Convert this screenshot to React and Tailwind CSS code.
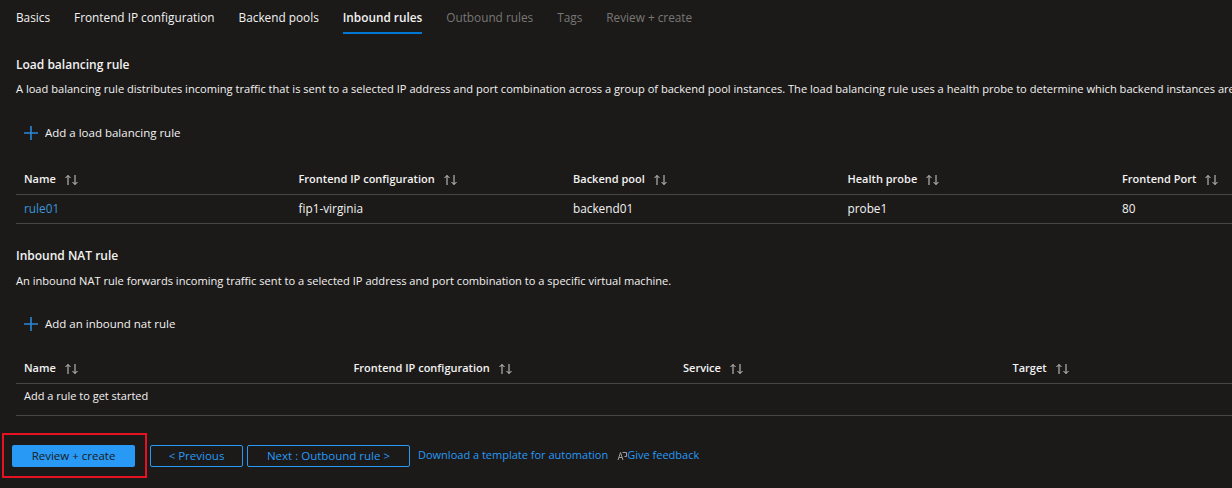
import React from 'react';

const font = { fontFamily: '"Segoe UI", "Open Sans", "Liberation Sans", sans-serif' };

function SortIcon() {
    return (
        <svg width="16" height="12" viewBox="0 0 16 12" className="ml-2 shrink-0" fill="none" stroke="#d2d0ce" strokeWidth="1">
            <path d="M4 11V1.5M1.5 4L4 1.5L6.5 4" />
            <path d="M11 1v9.5M8.5 8L11 10.5L13.5 8" />
        </svg>
    );
}

function PlusIcon() {
    return (
        <svg width="14" height="14" viewBox="0 0 14 14" className="shrink-0" stroke="#2b88d8" strokeWidth="1.6">
            <path d="M7 0v14M0 7h14" />
        </svg>
    );
}

function Table({ cols, colW, rows }) {
    return (
        <div className="ml-4" style={{ width: cols.length * colW }}>
            <div className="flex h-[30px] items-center border-b border-[#484644]">
                {cols.map((c) => (
                    <div key={c} className="flex items-center px-2 text-[11px] font-semibold text-[#f3f2f1]" style={{ width: colW }}>
                        {c}
                        <SortIcon />
                    </div>
                ))}
            </div>
            {rows}
        </div>
    );
}

export default function App() {
    const tabs = [
        { label: 'Basics', state: 'done' },
        { label: 'Frontend IP configuration', state: 'done' },
        { label: 'Backend pools', state: 'done' },
        { label: 'Inbound rules', state: 'active' },
        { label: 'Outbound rules', state: 'off' },
        { label: 'Tags', state: 'off' },
        { label: 'Review + create', state: 'off' },
    ];

    return (
        <div className="h-[488px] w-[1232px] overflow-hidden bg-[#1b1a19] text-[#f3f2f1]" style={font}>
            {/* Tabs */}
            <div className="flex gap-[24px] pl-4">
                {tabs.map((t) => (
                    <div
                        key={t.label}
                        className={
                            'flex h-[34px] items-center whitespace-nowrap border-b-2 pt-[3px] text-[11.8px] ' +
                            (t.state === 'active'
                                ? 'border-[#0078d4] font-semibold text-[#f3f2f1]'
                                : t.state === 'off'
                                ? 'border-transparent text-[#797775]'
                                : 'border-transparent text-[#f3f2f1]')
                        }
                    >
                        {t.label}
                    </div>
                ))}
            </div>

            {/* Load balancing rule */}
            <div className="mt-[22px] pl-4 text-[12px] font-semibold leading-[18px]">Load balancing rule</div>
            <div className="mt-[7px] whitespace-nowrap pl-4 text-[11.1px] leading-[16px]">
                A load balancing rule distributes incoming traffic that is sent to a selected IP address and port combination across a group of backend pool instances. The load balancing rule uses a health probe to determine which backend instances are healthy and can receive traffic.
            </div>
            <div className="mt-[26px] flex h-[20px] items-center gap-[7px] pl-6 text-[11.5px]">
                <PlusIcon />
                <span>Add a load balancing rule</span>
            </div>

            <div className="mt-[22px]">
                <Table
                    cols={['Name', 'Frontend IP configuration', 'Backend pool', 'Health probe', 'Frontend Port']}
                    colW={274.5}
                    rows={
                        <div className="flex h-[29px] items-center border-b border-[#484644] text-[11.8px]">
                            <div className="px-2 text-[#3a96dd]" style={{ width: 274.5 }}>rule01</div>
                            <div className="px-2" style={{ width: 274.5 }}>fip1-virginia</div>
                            <div className="px-2" style={{ width: 274.5 }}>backend01</div>
                            <div className="px-2" style={{ width: 274.5 }}>probe1</div>
                            <div className="px-2" style={{ width: 274.5 }}>80</div>
                        </div>
                    }
                />
            </div>

            {/* Inbound NAT rule */}
            <div className="mt-[23px] pl-4 text-[12px] font-semibold leading-[18px]">Inbound NAT rule</div>
            <div className="mt-[8px] whitespace-nowrap pl-4 text-[11.1px] leading-[16px]">
                An inbound NAT rule forwards incoming traffic sent to a selected IP address and port combination to a specific virtual machine.
            </div>
            <div className="mt-[25px] flex h-[20px] items-center gap-[7px] pl-6 text-[11.5px]">
                <PlusIcon />
                <span>Add an inbound nat rule</span>
            </div>

            <div className="mt-[20px]">
                <Table
                    cols={['Name', 'Frontend IP configuration', 'Service', 'Target']}
                    colW={329.5}
                    rows={
                        <div className="flex h-[32px] items-center border-b border-[#484644] px-2 pb-[6px] text-[11px]">
                            Add a rule to get started
                        </div>
                    }
                />
            </div>

            {/* Footer */}
            <div className="mt-[17px] flex items-center pl-[2px] text-[11.5px]">
                <div className="flex h-[45px] w-[145px] items-center border-2 border-[#e81123] pl-[8px]">
                    <button className="h-[22px] w-[123px] rounded-[2px] bg-[#2899f5] text-[#1b1a19]">Review + create</button>
                </div>
                <button className="ml-[3px] h-[22px] w-[93px] rounded-[2px] border border-[#2899f5] text-[#2899f5]">&lt; Previous</button>
                <button className="ml-[4px] h-[22px] w-[163px] rounded-[2px] border border-[#2899f5] text-[#2899f5]">Next : Outbound rule &gt;</button>
                <span className="ml-[8px] text-[11px] text-[#2899f5]">Download a template for automation</span>
                <span className="ml-[9px] flex items-center text-[11px] text-[#2899f5]">
                    <svg width="10" height="10" viewBox="0 0 10 10" fill="none" stroke="#a19f9d" strokeWidth="1">
                        <path d="M1 9L3.5 1.5L6 9M2 6.5h3" />
                        <path d="M5.5 1.5h4v4h-2" />
                    </svg>
                    Give feedback
                </span>
            </div>
        </div>
    );
}
